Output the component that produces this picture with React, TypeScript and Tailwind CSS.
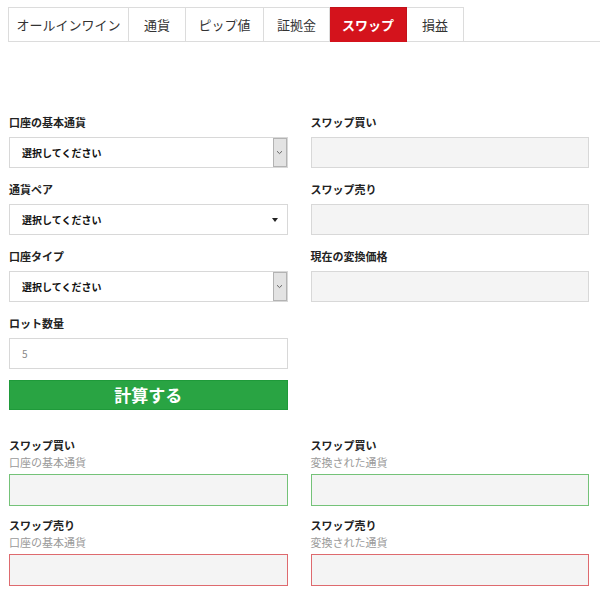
const tabs = [
  { label: 'オールインワイン', w: 'w-[121px] border-l' },
  { label: '通貨', w: 'w-[57px]' },
  { label: 'ピップ値', w: 'w-[78px]' },
  { label: '証拠金', w: 'w-[66px]' },
  { label: 'スワップ', w: 'w-[77px]', active: true },
  { label: '損益', w: 'w-[57px]' },
];

function Label({ children }: { children: React.ReactNode }) {
  return <div className="h-[14px] text-[11px] leading-[14px] font-bold text-[#222]">{children}</div>;
}

function Field({ children }: { children: React.ReactNode }) {
  return <div className="mb-[14px]">{children}</div>;
}

function BoxSelect() {
  return (
    <div className="mt-[8px] h-[31px] border border-[#d8d8d8] bg-white flex items-center justify-between">
      <span className="pl-[12px] text-[10px] font-bold text-[#111]">選択してください</span>
      <div className="h-full w-[14px] bg-[#e3e3e3] border border-[#b3b3b3] flex items-center justify-center">
        <svg width="7" height="5" viewBox="0 0 7 5">
          <path d="M1 1.2 L3.5 3.6 L6 1.2" fill="none" stroke="#666" strokeWidth="1" />
        </svg>
      </div>
    </div>
  );
}

function CaretSelect() {
  return (
    <div className="mt-[8px] h-[31px] border border-[#d8d8d8] bg-white flex items-center justify-between">
      <span className="pl-[12px] text-[10px] font-bold text-[#111]">選択してください</span>
      <svg width="6" height="4" viewBox="0 0 6 4" className="mr-[9px]">
        <path d="M0 0 H6 L3 4 Z" fill="#222" />
      </svg>
    </div>
  );
}

function ReadOnly() {
  return <div className="h-[31px] border border-[#d8d8d8] bg-[#f4f4f4]" />;
}

const toneBox = {
  green: 'h-[32px] border border-solid border-[#74c278] bg-[#f4f4f4]',
  red: 'h-[32px] border border-solid border-[#de6a6e] bg-[#f4f4f4]',
};

function Result({ title, sub, tone }: { title: string; sub: string; tone: 'green' | 'red' }) {
  return (
    <div className="mb-[12px]">
      <Label>{title}</Label>
      <div className="mt-[3px] h-[14px] text-[11px] leading-[14px] text-[#9a9a9a]">{sub}</div>
      <div className="mt-[5px]">
        <div className={toneBox[tone]} />
      </div>
    </div>
  );
}

export default function App() {
  return (
    <div
      className="w-[600px] h-[595px] bg-white overflow-hidden"
      style={{ fontFamily: '"Noto Sans CJK JP", "Noto Sans", sans-serif' }}
    >
      <div className="pl-[8px] pt-[7px]">
        <div className="flex border-b border-[#dcdcdc]">
          {tabs.map((t) => (
            <div
              key={t.label}
              className={`${t.w} h-[35px] -mb-px flex items-center justify-center text-[13px] border-t border-r ${
                t.active
                  ? 'bg-[#d4131c] border-[#c2121a] text-white font-bold'
                  : 'border-[#dcdcdc] text-[#333]'
              }`}
            >
              {t.label}
            </div>
          ))}
        </div>
      </div>

      <div className="pl-[9px] pr-[11px] pt-[73px]">
        <div className="grid grid-cols-2 gap-x-[23px]">
          <div>
            <Field>
              <Label>口座の基本通貨</Label>
              <BoxSelect />
            </Field>
            <Field>
              <Label>通貨ペア</Label>
              <CaretSelect />
            </Field>
            <Field>
              <Label>口座タイプ</Label>
              <BoxSelect />
            </Field>
            <div className="mb-[11px]">
              <Label>ロット数量</Label>
              <div className="mt-[8px] h-[31px] border border-[#d8d8d8] bg-white flex items-center pl-[12px] text-[10px] text-[#888]">
                5
              </div>
            </div>
            <button className="w-full h-[30px] bg-[#29a443] border border-[#1f9a3a] text-white text-[17px] font-bold flex items-center justify-center">
              計算する
            </button>
          </div>
          <div>
            <Field>
              <Label>スワップ買い</Label>
              <div className="mt-[8px]">
                <ReadOnly />
              </div>
            </Field>
            <Field>
              <Label>スワップ売り</Label>
              <div className="mt-[8px]">
                <ReadOnly />
              </div>
            </Field>
            <Field>
              <Label>現在の変換価格</Label>
              <div className="mt-[8px]">
                <ReadOnly />
              </div>
            </Field>
          </div>
        </div>

        <div className="grid grid-cols-2 gap-x-[23px] mt-[28px]">
          <div>
            <Result title="スワップ買い" sub="口座の基本通貨" tone="green" />
            <Result title="スワップ売り" sub="口座の基本通貨" tone="red" />
          </div>
          <div>
            <Result title="スワップ買い" sub="変換された通貨" tone="green" />
            <Result title="スワップ売り" sub="変換された通貨" tone="red" />
          </div>
        </div>
      </div>
    </div>
  );
}
